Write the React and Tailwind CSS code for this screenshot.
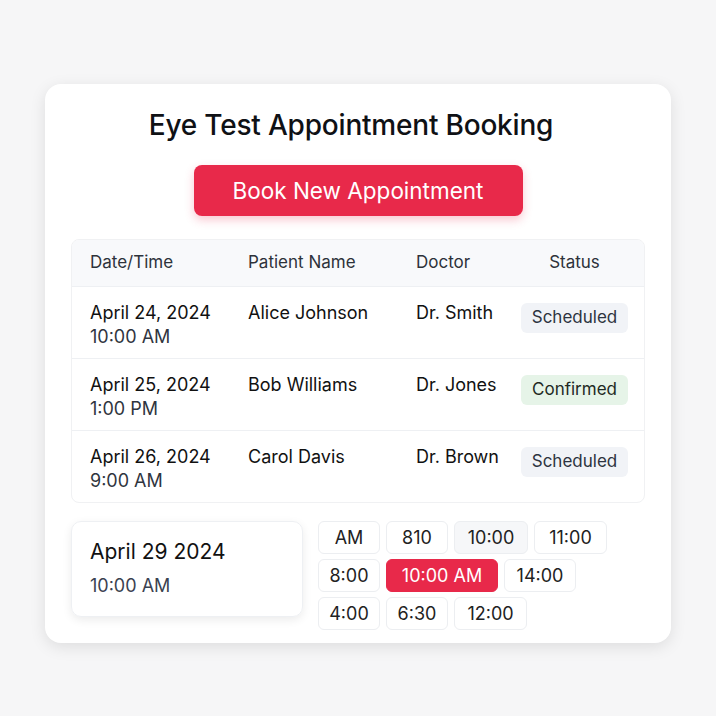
import React from 'react';

const appointments = [
  { date: 'April 24, 2024', time: '10:00 AM', patient: 'Alice Johnson', doctor: 'Dr. Smith', status: 'Scheduled' },
  { date: 'April 25, 2024', time: '1:00 PM', patient: 'Bob Williams', doctor: 'Dr. Jones', status: 'Confirmed' },
  { date: 'April 26, 2024', time: '9:00 AM', patient: 'Carol Davis', doctor: 'Dr. Brown', status: 'Scheduled' },
];

const slotRows = [
  [
    { label: 'AM', w: 'w-[62px]' },
    { label: '810', w: 'w-[62px]' },
    { label: '10:00', w: 'w-[74px]', muted: true },
    { label: '11:00', w: 'w-[73px]' },
  ],
  [
    { label: '8:00', w: 'w-[62px]' },
    { label: '10:00 AM', w: 'w-[112px]', active: true },
    { label: '14:00', w: 'w-[72px]' },
  ],
  [
    { label: '4:00', w: 'w-[62px]' },
    { label: '6:30', w: 'w-[62px]' },
    { label: '12:00', w: 'w-[73px]' },
  ],
];

const StatusBadge = ({ status }) => {
  const confirmed = status === 'Confirmed';
  return (
    <span
      className={`inline-flex h-[30px] w-[107px] items-center justify-center rounded-md text-[17px] ${
        confirmed ? 'bg-[#e6f4e8] text-[#1f2a24]' : 'bg-[#f1f3f7] text-[#2d3440]'
      }`}
    >
      {status}
    </span>
  );
};

const SlotChip = ({ slot }) => {
  let look = 'bg-white border-[#eceef1] text-[#222]';
  if (slot.muted) look = 'bg-[#f6f7f9] border-[#eceef1] text-[#222]';
  if (slot.active) look = 'bg-[#e8294a] border-[#e8294a] text-white';
  return (
    <div className={`${slot.w} flex h-[33px] items-center justify-center rounded-md border text-[18px] ${look}`}>
      {slot.label}
    </div>
  );
};

export default function App() {
  return (
    <div
      className="min-h-[716px] bg-[#f6f6f7] pt-[84px]"
      style={{ fontFamily: 'Inter, "Noto Sans", sans-serif' }}
    >
      <div className="mx-auto w-[626px] rounded-2xl bg-white px-[26px] pb-[13px] pt-[22px] shadow-[0_4px_16px_rgba(0,0,0,0.10)]">
        {/* Header */}
        <h1 className="pr-[14px] text-center text-[28px] font-medium leading-[38px] tracking-[-0.2px] text-[#0f1115]">
          Eye Test Appointment Booking
        </h1>
        <div className="mt-[21px] flex justify-center">
          <button className="h-[51px] w-[329px] rounded-lg bg-[#e8294a] text-[22.5px] text-white shadow-[0_4px_10px_rgba(232,41,74,0.25)]">
            Book New Appointment
          </button>
        </div>

        {/* Table */}
        <div className="mt-[23px] overflow-hidden rounded-lg border border-[#f0f1f3]">
          <div className="grid h-[46px] grid-cols-[158px_168px_105px_107px] items-center bg-[#f8f9fb] pl-[18px] pr-[17px] text-[17px] text-[#2d323a]">
            <div>Date/Time</div>
            <div>Patient Name</div>
            <div>Doctor</div>
            <div className="text-center">Status</div>
          </div>
          {appointments.map((a, i) => (
            <div
              key={i}
              className="grid h-[72px] grid-cols-[158px_168px_105px_107px] border-t border-[#eef0f3] pl-[18px] pr-[17px] pt-[14px] text-[18px]"
            >
              <div className="leading-[24px]">
                <div className="text-[#111]">{a.date}</div>
                <div className="text-[#2f3540]">{a.time}</div>
              </div>
              <div className="leading-[24px] text-[#111]">{a.patient}</div>
              <div className="leading-[24px] text-[#111]">{a.doctor}</div>
              <div className="pt-[2px]">
                <StatusBadge status={a.status} />
              </div>
            </div>
          ))}
        </div>

        {/* Picker */}
        <div className="mt-[18px] flex gap-[15px]">
          <div className="h-[96px] w-[232px] rounded-[10px] border border-[#eef0f3] px-[18px] pt-[16px] shadow-[0_3px_10px_rgba(0,0,0,0.08)]">
            <div className="text-[21px] leading-[28px] text-[#111]">April 29 2024</div>
            <div className="mt-[8px] text-[18px] leading-[24px] text-[#3a4250]">10:00 AM</div>
          </div>
          <div className="flex flex-col gap-[5px]">
            {slotRows.map((row, i) => (
              <div key={i} className="flex gap-[6px]">
                {row.map((slot, j) => (
                  <SlotChip key={j} slot={slot} />
                ))}
              </div>
            ))}
          </div>
        </div>
      </div>
    </div>
  );
}
